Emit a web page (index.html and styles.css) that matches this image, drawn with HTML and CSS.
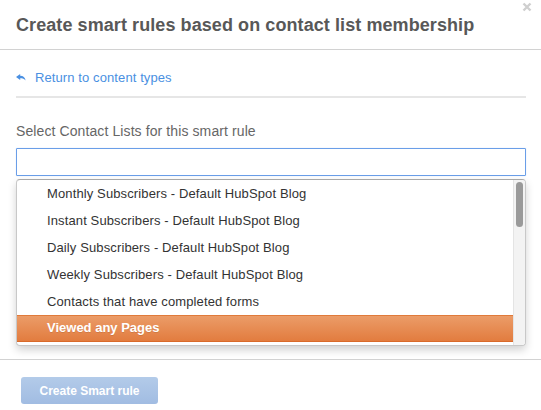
FILE: index.html
```html
<!DOCTYPE html>
<html lang="en">

<head>
    <meta charset="UTF-8">
    <title>Create smart rules</title>
    <link rel="stylesheet" href="styles.css">
</head>

<body>

    <div class="modal">
        <!-- Header -->
        <div class="modal-header">
            <h3>Create smart rules based on contact list membership</h3>
            <span class="close-btn">
                <svg width="10" height="10" viewBox="0 0 10 10"><path d="M1.5 1.5 L8.5 8.5 M8.5 1.5 L1.5 8.5" stroke="#cfcfcf" stroke-width="2.4" /></svg>
            </span>
        </div>

        <!-- Body -->
        <div class="modal-body">
            <div class="back-row">
                <a class="back-link" href="#">
                    <svg width="10" height="7" viewBox="0 0 10 7"><path d="M0 3 L4.2 0 V1.8 C7.2 1.8 9.2 3.6 9.6 6.6 C8.4 4.8 6.6 4.2 4.2 4.2 V6 Z" fill="#4a90e2" /></svg>
                    Return to content types
                </a>
            </div>

            <label class="field-label">Select Contact Lists for this smart rule</label>
            <input type="text" class="search-input">

            <!-- Dropdown list -->
            <div class="dropdown">
                <ul class="options">
                    <li>Monthly Subscribers - Default HubSpot Blog</li>
                    <li>Instant Subscribers - Default HubSpot Blog</li>
                    <li>Daily Subscribers - Default HubSpot Blog</li>
                    <li>Weekly Subscribers - Default HubSpot Blog</li>
                    <li>Contacts that have completed forms</li>
                    <li class="active">Viewed any Pages</li>
                </ul>
                <div class="scrollbar"><div class="thumb"></div></div>
            </div>
        </div>

        <!-- Footer -->
        <div class="modal-footer">
            <button class="create-btn" disabled>Create Smart rule</button>
        </div>
    </div>

</body>

</html>
```

FILE: styles.css
```css
body {
    margin: 0;
    background: #fff;
    font-family: "Liberation Sans", Arial, sans-serif;
}

.modal {
    position: relative;
    width: 541px;
    height: 410px;
    overflow: hidden;
}

/* Header */
.modal-header {
    height: 49px;
    padding: 0 16px;
    border-bottom: 1px solid #d2d2d2;
    display: flex;
    align-items: center;
}

.modal-header h3 {
    margin: 2px 0 0 0;
    font-size: 18px;
    font-weight: bold;
    letter-spacing: 0.08px;
    color: #585858;
}

.close-btn {
    position: absolute;
    top: 2px;
    right: 9px;
    line-height: 0;
}

/* Body */
.modal-body {
    padding: 0 15px 0 16px;
}

.back-row {
    height: 46px;
    border-bottom: 2px solid #e6e6e6;
    display: flex;
    align-items: center;
}

.back-link {
    margin-top: 9px;
    color: #4a90e2;
    font-size: 13px;
    letter-spacing: 0.1px;
    text-decoration: none;
    display: flex;
    align-items: center;
    gap: 9px;
}

.field-label {
    display: block;
    margin-top: 25px;
    font-size: 14px;
    letter-spacing: 0.1px;
    color: #666;
}

.search-input {
    display: block;
    box-sizing: border-box;
    width: 100%;
    height: 28px;
    margin-top: 9px;
    border: 1px solid #6a9ee8;
    border-radius: 1px;
    outline: none;
    box-shadow: 0 0 1px rgba(74, 144, 226, 0.4);
}

/* Dropdown */
.dropdown {
    display: flex;
    height: 165px;
    margin-top: 3px;
    border: 1px solid #c8c8c8;
    border-top-color: #a8a8a8;
    border-radius: 4px;
    overflow: hidden;
    box-shadow: 0 4px 8px rgba(0, 0, 0, 0.18);
    background: #fff;
}

.options {
    flex: 1;
    margin: 0;
    padding: 0;
    list-style: none;
}

.options li {
    height: 27px;
    line-height: 28px;
    padding-left: 30px;
    font-size: 13px;
    letter-spacing: 0.12px;
    color: #333;
}

.options li.active {
    box-sizing: border-box;
    border-top: 1px solid #e07a3a;
    border-bottom: 1px solid #d96a2a;
    background: linear-gradient(#eb9c68, #e27c3f);
    color: #fff;
    font-weight: bold;
    letter-spacing: 0;
    line-height: 24px;
    text-shadow: 0 1px 0 rgba(0, 0, 0, 0.1);
}

.scrollbar {
    background: #f3f3f3;
    border-left: 1px solid #e4e4e4;
    padding: 2px 2px 0 2px;
    box-sizing: border-box;
    width: 12px;
}

.thumb {
    height: 45px;
    background: #9a9a9a;
    border-radius: 4px;
}

/* Footer */
.modal-footer {
    margin-top: 13px;
    border-top: 1px solid #d2d2d2;
    padding: 17px 21px;
}

.create-btn {
    width: 137px;
    height: 27px;
    border: none;
    border-radius: 3px;
    background: linear-gradient(#b3cbe9, #a1bce2);
    color: #fff;
    font-family: "Liberation Sans", Arial, sans-serif;
    font-size: 12px;
    font-weight: bold;
}
```
